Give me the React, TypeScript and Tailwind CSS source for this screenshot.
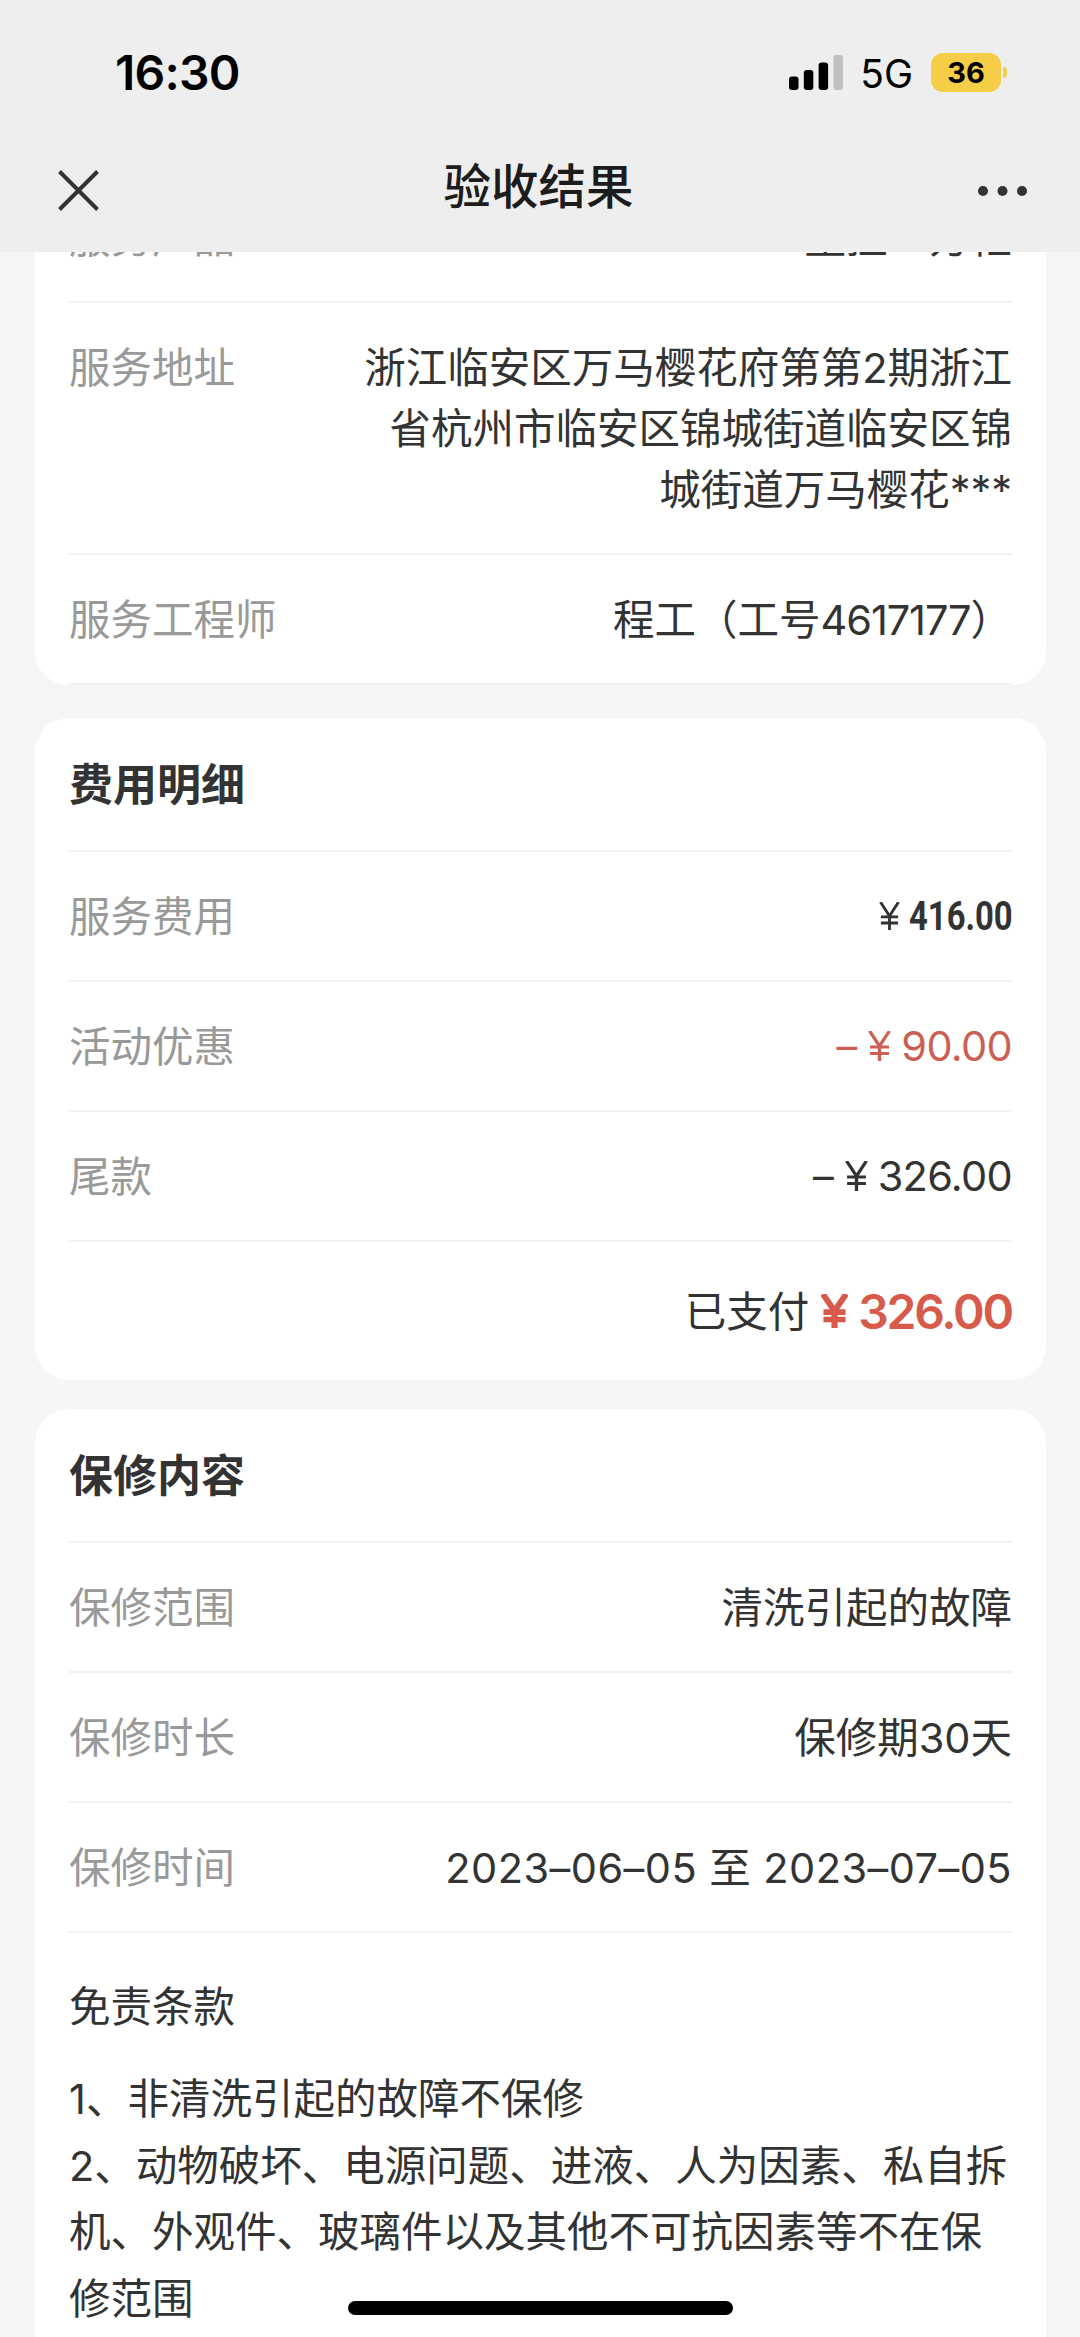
import type { ReactNode } from "react";

const costRows = [
  { label: "活动优惠", value: "90.00", color: "text-[#cb5f53]" },
  { label: "尾款", value: "326.00", color: "text-[#333]" }
];

const warrantyRows = [
  { label: "保修范围", value: "清洗引起的故障" },
  { label: "保修时长", value: "保修期30天" }
];

export default function App() {
  return (
    <div className="relative flex h-[2337px] w-[1080px] flex-col overflow-hidden bg-[#f6f6f8] font-['Inter','Noto_Sans_CJK_SC',sans-serif] text-[41.5px] leading-[61px] text-[#333]">
      <header className="z-10 h-[252px] shrink-0 bg-[#eee]">
        <StatusBar />
        <NavBar />
      </header>

      <main className="-mt-[79px] flex flex-col pr-[34px] pl-[35px]">
        <Card className="rounded-b-[34px]">
          <Row label="服务产品">壁挂一方柜</Row>
          <Row label="服务地址">
            浙江临安区万马樱花府第第2期浙江
            <br />
            省杭州市临安区锦城街道临安区锦
            <br />
            城街道万马樱花***
          </Row>
          <Row label="服务工程师">
            程工（工号<span className="tracking-[-1.1px]">4617177</span>）
          </Row>
        </Card>

        <Card className="mt-[33px] rounded-[34px]">
          <Heading>费用明细</Heading>
          <Row label="服务费用">
            <span className="flex h-[58px] items-center justify-end">
              <Yen className="mr-[9px] h-[28px] w-[21px]" stroke={3} />
              <span className="w-[103px]">
                <span className="inline-block origin-left scale-x-[0.82] font-['Roboto'] text-[40px] font-bold">416.00</span>
              </span>
            </span>
          </Row>
          {costRows.map((row) => (
            <Row key={row.label} label={row.label}>
              <span className={`flex h-[58px] items-center justify-end ${row.color}`}>
                <span>–</span>
                <Yen className="mr-[10px] ml-[11px] h-[30px] w-[23px]" stroke={3.2} />
                <span className="tracking-[-0.7px]">{row.value}</span>
              </span>
            </Row>
          ))}
          <div className="flex h-[138px] items-center justify-end">
            <span className="pt-[2px]">已支付</span>
            <span className="flex items-center text-[48px] font-semibold text-[#d75a4a]">
              <Yen className="mr-[10px] ml-[12px] h-[34px] w-[27px]" stroke={5} />
              <span className="tracking-[-2.2px]">326.00</span>
            </span>
          </div>
        </Card>

        <Card className="mt-[29px] rounded-t-[34px] pb-20">
          <Heading>保修内容</Heading>
          {warrantyRows.map((row) => (
            <Row key={row.label} label={row.label}>
              {row.value}
            </Row>
          ))}
          <Row label="保修时间">
            <span className="tracking-[0.45px]">2023–06–05 至 2023–07–05</span>
          </Row>
          <h3 className="mt-[44px]">免责条款</h3>
          <div className="mt-[28px] leading-[66.5px] whitespace-nowrap">
            <p>1、非清洗引起的故障不保修</p>
            <p>
              2、动物破坏、电源问题、进液、人为因素、私自拆
              <br />
              机、外观件、玻璃件以及其他不可抗因素等不在保
              <br />
              修范围
            </p>
          </div>
        </Card>
      </main>

      {/* Home indicator */}
      <div className="absolute bottom-[22px] left-[348px] h-[14px] w-[385px] rounded-full bg-black" />
    </div>
  );
}

function StatusBar() {
  return (
    <div className="flex h-[144px] items-center justify-between pr-[73px] pl-[115px] text-black">
      <span className="text-[48px] font-semibold tracking-[-0.8px]">16:30</span>
      <div className="flex items-center">
        <svg className="h-[35px] w-[54px]" viewBox="0 0 54 35">
          <rect x="0" y="21.5" width="9.5" height="13.5" rx="3" />
          <rect x="14.8" y="15" width="9.5" height="20" rx="3" />
          <rect x="29.6" y="7.5" width="9.5" height="27.5" rx="3" />
          <rect x="44.4" y="0" width="9.5" height="35" rx="3" fill="#c0c0c0" />
        </svg>
        <span className="ml-[17px] pt-[2px] text-[39px]">5G</span>
        <span className="ml-[18px] flex h-[39px] w-[70px] items-center justify-center rounded-[12px] bg-[#f5cd47] text-[29px] font-bold">36</span>
        <span className="ml-[2px] h-[11px] w-[4px] rounded-r-full bg-[#f5cd47]" />
      </div>
    </div>
  );
}

function NavBar() {
  return (
    <nav className="flex h-[93px] items-center justify-between pr-[53px] pl-[58px]">
      <svg className="h-[41px] w-[41px]" viewBox="0 0 41 41" fill="none" stroke="#333" strokeWidth="4">
        <path d="M1.5 1.5l38 38M39.5 1.5l-38 38" />
      </svg>
      <h1 className="pb-[9px] text-[47.5px] font-medium text-[#1c1c1c]">验收结果</h1>
      <svg className="h-[10px] w-[49px]" viewBox="0 0 49 10" fill="#333">
        <circle cx="5" cy="5" r="5" />
        <circle cx="24.5" cy="5" r="5" />
        <circle cx="44" cy="5" r="5" />
      </svg>
    </nav>
  );
}

function Card({ className = "", children }: { className?: string; children: ReactNode }) {
  return <section className={`bg-white px-[34px] ${className}`}>{children}</section>;
}

function Heading({ children }: { children: ReactNode }) {
  return <h2 className="flex h-[134px] items-center border-b-2 border-[#f2f2f3] pt-[3px] text-[44px] font-bold">{children}</h2>;
}

function Row({ label, children }: { label: string; children: ReactNode }) {
  return (
    <div className="flex justify-between border-b-2 border-[#f2f2f3] pt-[35px] pb-[32px]">
      <span className="text-[#999]">{label}</span>
      <div className="text-right">{children}</div>
    </div>
  );
}

function Yen({ className, stroke }: { className: string; stroke: number }) {
  return (
    <svg className={className} viewBox="0 0 22 30" preserveAspectRatio="none" fill="none" stroke="currentColor" strokeWidth={stroke}>
      <path d="M1.5 0L11 15L20.5 0M11 15V30M2 16H20M2 22.5H20" />
    </svg>
  );
}
